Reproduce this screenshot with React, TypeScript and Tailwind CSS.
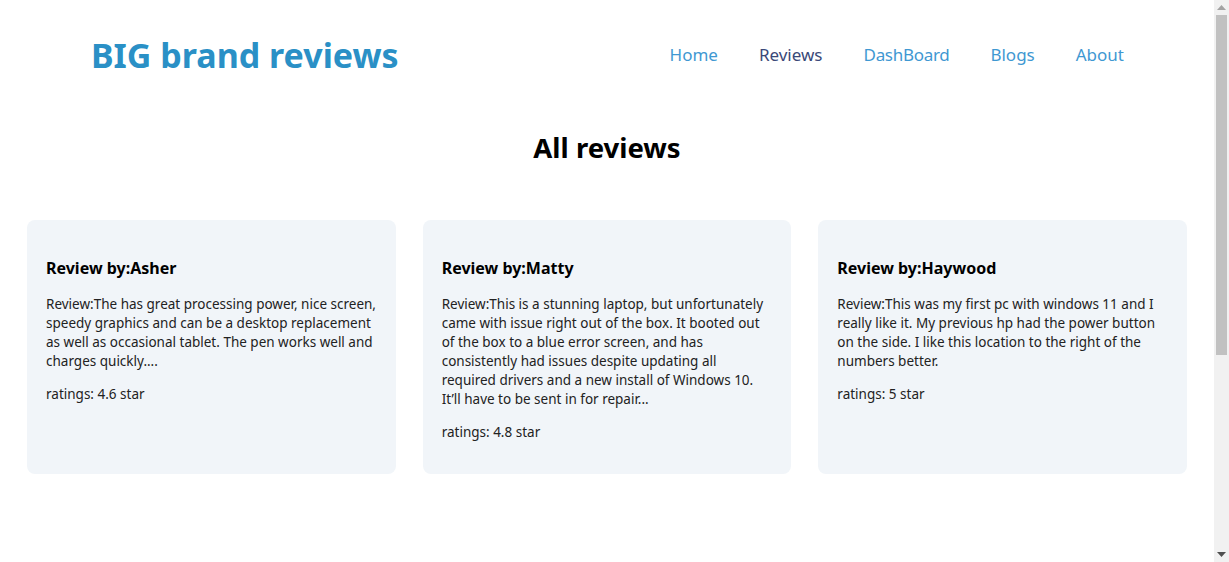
import React from "react";

const reviews = [
  {
    name: "Asher",
    text: "Review:The has great processing power, nice screen, speedy graphics and can be a desktop replacement as well as occasional tablet. The pen works well and charges quickly....",
    rating: "4.6",
  },
  {
    name: "Matty",
    text: "Review:This is a stunning laptop, but unfortunately came with issue right out of the box. It booted out of the box to a blue error screen, and has consistently had issues despite updating all required drivers and a new install of Windows 10. It\u2019ll have to be sent in for repair...",
    rating: "4.8",
  },
  {
    name: "Haywood",
    text: "Review:This was my first pc with windows 11 and I really like it. My previous hp had the power button on the side. I like this location to the right of the numbers better.",
    rating: "5",
  },
];

function Scrollbar() {
  return (
    <div className="flex h-full w-[15px] shrink-0 flex-col items-center bg-[#f1f1f1]">
      <div className="flex h-[15px] w-full items-center justify-center">
        <svg width="9" height="5" viewBox="0 0 9 5">
          <path d="M0 5 L4.5 0 L9 5 Z" fill="#a3a3a3" />
        </svg>
      </div>
      <div className="h-[340px] w-[11px] bg-[#c1c1c1]" />
      <div className="flex-1" />
      <div className="flex h-[15px] w-full items-center justify-center">
        <svg width="9" height="5" viewBox="0 0 9 5">
          <path d="M0 0 L9 0 L4.5 5 Z" fill="#505050" />
        </svg>
      </div>
    </div>
  );
}

export default function App() {
  return (
    <div className="flex h-[562px] overflow-hidden bg-white font-['Noto_Sans',sans-serif] text-[#222]">
      <main className="w-[1214px] shrink-0">
        <header className="flex h-[110px] items-center justify-between pl-[91px] pr-[90px]">
          <h1 className="text-[34px] font-bold leading-none text-[#2a90c6]">BIG brand reviews</h1>
          <nav className="flex items-center gap-[41px] text-[17px]">
            <a className="text-[#3f98d2]">Home</a>
            <a className="text-[#3a4878]">Reviews</a>
            <a className="tracking-[-0.3px] text-[#3f98d2]">DashBoard</a>
            <a className="text-[#3f98d2]">Blogs</a>
            <a className="text-[#3f98d2]">About</a>
          </nav>
        </header>
        <h2 className="mt-[20px] text-center text-[27.5px] font-bold leading-[36px] text-black">All reviews</h2>
        <div className="mt-[54px] grid grid-cols-3 gap-[27px] px-[27px]">
          {reviews.map((r) => (
            <div key={r.name} className="rounded-[8px] bg-[#f1f5f9] px-[19px] pt-[37px] pb-[32px]">
              <h3 className="text-[16px] font-bold leading-[22px] text-black">Review by:{r.name}</h3>
              <p className="mt-[16px] text-[13.5px] leading-[19px]">{r.text}</p>
              <p className="mt-[14px] text-[13.5px] leading-[19px]">ratings: {r.rating} star</p>
            </div>
          ))}
        </div>
      </main>
      <Scrollbar />
    </div>
  );
}
